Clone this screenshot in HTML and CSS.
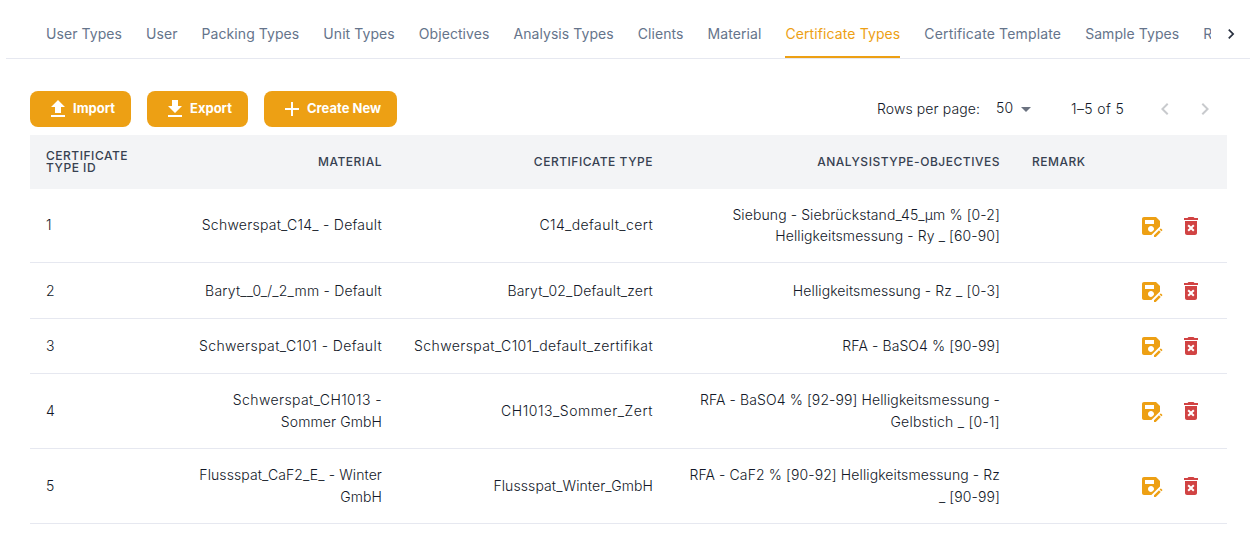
FILE: index.html
```html
<!DOCTYPE html>
<html lang="en">
<head>
<meta charset="utf-8">
<title>Certificate Types</title>
<link rel="stylesheet" href="styles.css">
</head>
<body>
<svg class="defs" width="0" height="0">
  <symbol id="save-as" viewBox="0 0 24 24"><path d="M21 12.4V7l-4-4H5c-1.11 0-2 .9-2 2v14c0 1.1.89 2 2 2h7.4l8.6-8.6zM15 15c0 .34-.06.67-.17.98l-1.86 1.86c-.31.1-.63.16-.97.16-1.66 0-3-1.34-3-3s1.34-3 3-3 3 1.34 3 3zM6 6h9v4H6V6zm13.99 10.25l1.77 1.77L16.77 23H15v-1.77l4.99-4.98zm3.26.26l-.85.85-1.77-1.77.85-.85c.2-.2.51-.2.71 0l1.06 1.06c.2.2.2.52 0 .71z"/></symbol>
  <symbol id="delete" viewBox="0 0 24 24"><path d="M6 19c0 1.1.9 2 2 2h8c1.1 0 2-.9 2-2V7H6v12zm2.46-7.12l1.41-1.41L12 12.59l2.12-2.12 1.41 1.41L13.41 14l2.12 2.12-1.41 1.41L12 15.41l-2.12 2.12-1.41-1.41L10.59 14l-2.13-2.12zM15.5 4l-1-1h-5l-1 1H5v2h14V4z"/></symbol>
</svg>
<nav class="tabs">
  <div class="tab-list">
    <a class="tab">User Types</a><a class="tab">User</a><a class="tab">Packing Types</a><a class="tab">Unit Types</a><a class="tab">Objectives</a><a class="tab">Analysis Types</a><a class="tab">Clients</a><a class="tab">Material</a><a class="tab active">Certificate Types</a><a class="tab loose">Certificate Template</a><a class="tab">Sample Types</a><a class="tab">R</a>
  </div>
  <div class="tab-scroll"><svg width="20" height="20" viewBox="0 0 24 24"><path d="M10 6L8.59 7.41 13.17 12l-4.58 4.59L10 18l6-6z"/></svg></div>
</nav>
<main class="content">
  <div class="toolbar">
    <button class="btn"><svg class="icon" viewBox="0 0 24 24"><path d="M5 20h14v-2H5v2zm0-10h4v6h6v-6h4l-7-7-7 7z"/></svg><span>Import</span></button>
    <button class="btn"><svg class="icon" viewBox="0 0 24 24"><path d="M5 20h14v-2H5v2zM19 9h-4V3H9v6H5l7 7 7-7z"/></svg><span>Export</span></button>
    <button class="btn wide"><svg class="icon" viewBox="0 0 24 24"><path d="M19 13h-6v6h-2v-6H5v-2h6V5h2v6h6v2z"/></svg><span>Create New</span></button>
    <div class="pagination">
      <span class="rows-label">Rows per page:</span>
      <span class="rows-value">50</span>
      <svg class="icon caret" viewBox="0 0 24 24"><path d="M7 10l5 5 5-5z"/></svg>
      <span class="range">1–5 of 5</span>
      <svg class="icon arrow" viewBox="0 0 24 24"><path d="M15.41 7.41L14 6l-6 6 6 6 1.41-1.41L10.83 12z"/></svg>
      <svg class="icon arrow" viewBox="0 0 24 24"><path d="M10 6L8.59 7.41 13.17 12l-4.58 4.59L10 18l6-6z"/></svg>
    </div>
  </div>
  <table class="table">
    <colgroup><col class="c-id"><col class="c-material"><col class="c-type"><col class="c-objectives"><col class="c-remark"><col></colgroup>
    <thead>
      <tr><th class="left">Certificate<br>Type ID</th><th>Material</th><th>Certificate Type</th><th>AnalysisType-Objectives</th><th class="left">Remark</th><th></th></tr>
    </thead>
    <tbody>
      <tr class="first"><td class="left">1</td><td class="ls-m">Schwerspat_C14_ - Default</td><td class="ls-l">C14_default_cert</td><td class="ls-s lines">Siebung - Siebrückstand_45_µm % [0-2]<br>Helligkeitsmessung - Ry _ [60-90]</td><td></td><td><div class="actions"><svg class="icon save"><use href="#save-as"/></svg><svg class="icon delete"><use href="#delete"/></svg></div></td></tr>
      <tr class="second"><td class="left">2</td><td>Baryt__0_/_2_mm - Default</td><td>Baryt_02_Default_zert</td><td class="ls-s">Helligkeitsmessung - Rz _ [0-3]</td><td></td><td><div class="actions"><svg class="icon save"><use href="#save-as"/></svg><svg class="icon delete"><use href="#delete"/></svg></div></td></tr>
      <tr class="short"><td class="left">3</td><td class="ls-l">Schwerspat_C101 - Default</td><td class="ls-l">Schwerspat_C101_default_zertifikat</td><td class="ls-s">RFA - BaSO4 % [90-99]</td><td></td><td><div class="actions"><svg class="icon save"><use href="#save-as"/></svg><svg class="icon delete"><use href="#delete"/></svg></div></td></tr>
      <tr class="tall"><td class="left">4</td><td class="ls-l">Schwerspat_CH1013 -<br><span class="ls-s">Sommer GmbH</span></td><td class="ls-xl">CH1013_Sommer_Zert</td><td class="ls-s">RFA - BaSO4 % [92-99] Helligkeitsmessung -<br><span class="ls-m">Gelbstich _ [0-1]</span></td><td></td><td><div class="actions"><svg class="icon save"><use href="#save-as"/></svg><svg class="icon delete"><use href="#delete"/></svg></div></td></tr>
      <tr class="tall"><td class="left">5</td><td class="ls-s">Flussspat_CaF2_E_ - Winter<br>GmbH</td><td class="ls-s">Flussspat_Winter_GmbH</td><td class="ls-s">RFA - CaF2 % [90-92] Helligkeitsmessung - Rz<br>_ [90-99]</td><td></td><td><div class="actions"><svg class="icon save"><use href="#save-as"/></svg><svg class="icon delete"><use href="#delete"/></svg></div></td></tr>
    </tbody>
  </table>
</main>
</body>
</html>
```
FILE: styles.css
```css
* { box-sizing: border-box; }
body { margin: 0; background: #fff; color: #121828; font-family: Inter, "Liberation Sans", sans-serif; font-size: 14px; overflow: hidden; }
svg { display: block; fill: currentColor; flex: none; }
.defs { position: absolute; }
.icon { width: 24px; height: 24px; }

.tabs { display: flex; height: 59px; margin-left: 6px; padding-top: 10px; border-bottom: 1px solid #e6e8f0; }
.tab-list { display: flex; gap: 24px; width: 1205px; padding-left: 40px; overflow: hidden; }
.tab { flex: none; height: 48px; line-height: 48px; font-weight: 430; letter-spacing: 0.07px; color: #65748b; white-space: nowrap; }
.tab.active { color: #eda014; letter-spacing: 0.11px; border-bottom: 2px solid #eda014; }
.tab.loose { letter-spacing: 0.15px; }
.tab-scroll { width: 39px; padding: 14px 0 0 10px; color: #29303f; }

.content { padding: 32px 23px 0 30px; }
.toolbar { display: flex; align-items: center; gap: 16px; height: 36px; margin-bottom: 8px; }
.btn { display: flex; align-items: center; width: 101px; height: 36px; padding: 0 0 0 16px; gap: 3px; border: 0; border-radius: 8px; background: #eda014; color: #fff; font: 650 13px Inter, "Liberation Sans", sans-serif; white-space: nowrap; }
.btn span { padding-bottom: 2px; }
.btn.wide { width: 133px; }
.pagination { display: flex; align-items: center; margin-left: auto; letter-spacing: 0.1px; font-weight: 300; white-space: nowrap; }
.rows-label { width: 119px; padding-bottom: 1px; }
.rows-value { width: 18px; padding-bottom: 3px; }
.caret { color: #6b7280; }
.range { width: 82px; margin-left: 33px; padding-bottom: 1px; letter-spacing: 0.4px; }
.arrow { color: #c8cacd; }
.arrow + .arrow { margin: 0 10px 0 16px; }

.table { width: 1197px; table-layout: fixed; border-collapse: separate; border-spacing: 0; }
.c-id { width: 147px; }
.c-material { width: 221px; }
.c-type { width: 271px; }
.c-objectives { width: 347px; }
.c-remark { width: 103px; }
th { height: 54px; padding: 0 16px; background: #f3f4f6; color: #374151; font-size: 12px; font-weight: 550; line-height: 12px; letter-spacing: 0.52px; text-align: right; text-transform: uppercase; white-space: nowrap; }
td { padding: 0 16px; border-bottom: 1px solid #e6e8f0; font-weight: 300; line-height: 22px; letter-spacing: 0.2px; text-align: right; white-space: nowrap; }
th.left, td.left { text-align: left; }
.ls-s { letter-spacing: 0.1px; }
.ls-m { letter-spacing: 0.25px; }
.ls-l { letter-spacing: 0.4px; }
.ls-xl { letter-spacing: 0.54px; }
.lines { line-height: 21px; }
.first { height: 74px; }
.first td { padding-bottom: 1px; }
.first td:last-child { padding-bottom: 0; }
.second { height: 56px; }
.short { height: 55px; }
.tall { height: 75px; }
.actions { display: flex; gap: 16px; margin-left: 4px; }
.save { color: #eda014; }
.delete { color: #d14343; }
```
